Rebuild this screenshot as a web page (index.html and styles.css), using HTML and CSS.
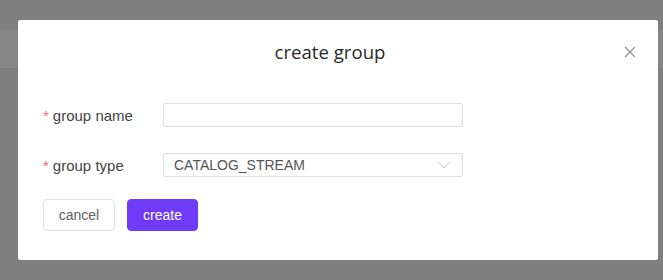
FILE: index.html
```html
<!DOCTYPE html>
<html lang="en">

<head>
    <meta charset="UTF-8">
    <meta name="viewport" content="width=device-width, initial-scale=1.0">
    <title>create group</title>
    <link rel="stylesheet" href="styles.css">
</head>

<body>

    <div class="dialog">
        <div class="dialog-header">
            <span class="dialog-title">create group</span>
            <button class="close-btn" aria-label="close">
                <svg width="12" height="12" viewBox="0 0 12 12">
                    <path d="M1 1 L11 11 M11 1 L1 11" stroke="#8c8f96" stroke-width="1.1" fill="none" />
                </svg>
            </button>
        </div>

        <form class="form">
            <div class="form-row">
                <label class="form-label" for="groupName"><span class="required">*</span>group name</label>
                <input class="form-input" type="text" id="groupName">
            </div>
            <div class="form-row">
                <label class="form-label" for="groupType"><span class="required">*</span>group type</label>
                <div class="form-select" id="groupType">
                    <span>CATALOG_STREAM</span>
                    <svg width="12" height="7" viewBox="0 0 12 7">
                        <path d="M0.5 0.5 L6 6 L11.5 0.5" stroke="#c4c6cc" stroke-width="1" fill="none" />
                    </svg>
                </div>
            </div>
            <div class="form-actions">
                <button type="button" class="btn btn-cancel">cancel</button>
                <button type="button" class="btn btn-primary">create</button>
            </div>
        </form>
    </div>

</body>

</html>
```

FILE: styles.css
```css
body {
    margin: 0;
    padding: 20px 5px 20px 18px;
    font-family: "Liberation Sans", Arial, sans-serif;
    background: linear-gradient(#7f7f7f 0, #7f7f7f 30px, #868686 30px, #868686 68px, #7b7b7b 68px, #7f7f7f 69px);
    background-color: #7f7f7f;
    min-height: 240px;
}

/* dialog box */
.dialog {
    width: 640px;
    height: 240px;
    box-sizing: border-box;
    background-color: #fff;
    border-radius: 2px;
}

.dialog-header {
    display: flex;
    justify-content: center;
    align-items: center;
    padding-top: 20px;
    padding-right: 16px;
    height: 24px;
    position: relative;
}

.dialog-title {
    font-family: "Open Sans", "Noto Sans", sans-serif;
    font-size: 18.6px;
    line-height: 24px;
    color: #2a2a2a;
}

.close-btn {
    position: absolute;
    right: 21px;
    top: 25px;
    width: 14px;
    height: 14px;
    padding: 1px;
    border: none;
    background: none;
    display: flex;
    align-items: center;
    justify-content: center;
}

.form {
    padding: 39px 25px 0 25px;
    display: flex;
    flex-direction: column;
}

.form-row {
    display: flex;
    align-items: center;
    height: 24px;
    margin-bottom: 26px;
}

.form-row:nth-child(2) {
    margin-bottom: 22px;
}

.form-label {
    width: 120px;
    font-size: 15px;
    color: #444;
}

.required {
    color: #f56c6c;
    margin-right: 4px;
}

.form-input {
    width: 300px;
    height: 24px;
    box-sizing: border-box;
    border: 1px solid #dcdfe6;
    border-radius: 2px;
    padding: 0 10px;
    margin: 0;
    outline: none;
}

.form-select {
    width: 300px;
    height: 24px;
    box-sizing: border-box;
    border: 1px solid #dcdfe6;
    border-radius: 2px;
    padding: 0 12px 0 10px;
    display: flex;
    align-items: center;
    justify-content: space-between;
    font-size: 14px;
    color: #555;
}

.form-actions {
    display: flex;
    gap: 12px;
}

.btn {
    height: 32px;
    padding: 0;
    border-radius: 4px;
    font-family: "Liberation Sans", Arial, sans-serif;
    font-size: 14px;
    cursor: pointer;
}

.btn-cancel {
    width: 72px;
    background-color: #fff;
    border: 1px solid #dcdfe6;
    color: #606266;
}

.btn-primary {
    width: 71px;
    background-color: #6f3bf7;
    border: 1px solid #6f3bf7;
    color: #fff;
}
```
